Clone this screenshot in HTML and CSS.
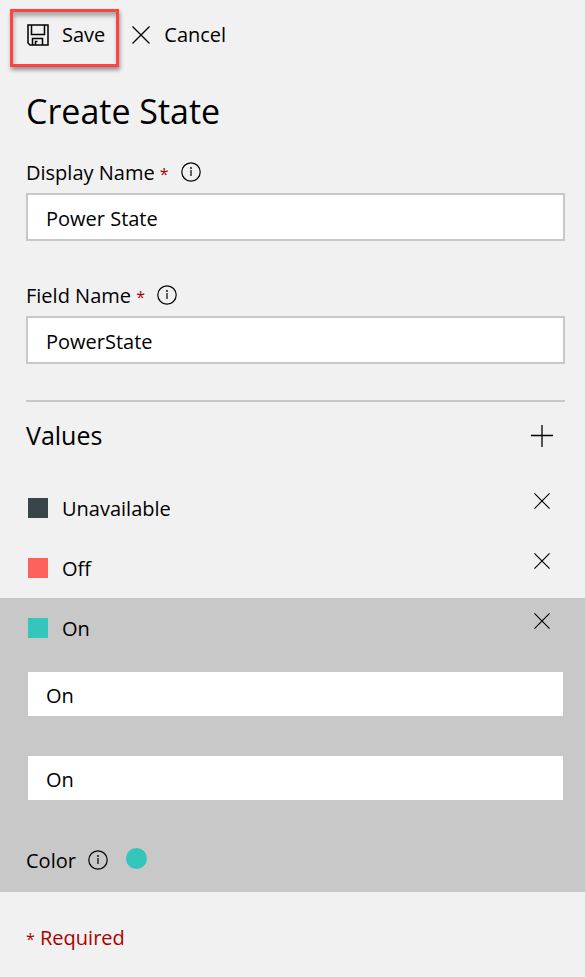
FILE: index.html
```html
<!DOCTYPE html>
<html lang="en">
<head>
<meta charset="utf-8">
<meta name="viewport" content="width=device-width, initial-scale=1">
<title>Create State</title>
<link rel="stylesheet" href="styles.css">
</head>
<body>
<svg class="sprite" aria-hidden="true">
  <symbol id="info" viewBox="0 0 20 20">
    <circle cx="10" cy="10" r="9.2" fill="none" stroke="currentColor" stroke-width="1.2"/>
    <path d="M10 8v6" fill="none" stroke="currentColor" stroke-width="1.2"/>
    <circle cx="10" cy="6" r=".9" fill="currentColor"/>
  </symbol>
  <symbol id="cross" viewBox="0 0 18 18">
    <path d="M.5.5l17 17M17.5.5l-17 17" fill="none" stroke="currentColor" stroke-width="1.3"/>
  </symbol>
</svg>
<form class="panel">
  <div class="toolbar">
    <button type="button" class="command highlighted">
      <svg class="icon-save" viewBox="0 0 22 22" aria-hidden="true">
        <path d="M1 1h20v20H3l-2-2zM4.500 1v9.500h13V1M5.500 21v-6.500h10V21M8.500 21v-3.500h2" fill="none" stroke="currentColor" stroke-width="1.5"/>
      </svg>
      <span>Save</span>
    </button>
    <button type="button" class="command">
      <svg class="icon-cancel" aria-hidden="true"><use href="#cross"/></svg>
      <span>Cancel</span>
    </button>
  </div>

  <h1>Create State</h1>

  <div class="field">
    <div class="label-row">
      <label for="display-name">Display Name <span class="mark">*</span></label>
      <svg class="icon-info" aria-hidden="true"><use href="#info"/></svg>
    </div>
    <input id="display-name" type="text" value="Power State" required>
  </div>
  <div class="field">
    <div class="label-row">
      <label for="field-name">Field Name <span class="mark">*</span></label>
      <svg class="icon-info" aria-hidden="true"><use href="#info"/></svg>
    </div>
    <input id="field-name" type="text" value="PowerState" required>
  </div>

  <div class="values-head">
    <h2>Values</h2>
    <button type="button" class="icon-button" aria-label="Add value">
      <svg class="icon-add" viewBox="0 0 22 22" aria-hidden="true"><path d="M11 0v22M0 10.500h22" fill="none" stroke="currentColor" stroke-width="1.300"/></svg>
    </button>
  </div>

  <ul class="values">
    <li class="value">
      <div class="value-row">
        <span class="swatch unavailable"></span><span class="value-name">Unavailable</span>
        <button type="button" class="icon-button remove" aria-label="Remove Unavailable"><svg class="icon-remove" aria-hidden="true"><use href="#cross"/></svg></button>
      </div>
    </li>
    <li class="value">
      <div class="value-row">
        <span class="swatch off"></span><span class="value-name">Off</span>
        <button type="button" class="icon-button remove" aria-label="Remove Off"><svg class="icon-remove" aria-hidden="true"><use href="#cross"/></svg></button>
      </div>
    </li>
    <li class="value selected">
      <div class="value-row">
        <span class="swatch on"></span><span class="value-name">On</span>
        <button type="button" class="icon-button remove" aria-label="Remove On"><svg class="icon-remove" aria-hidden="true"><use href="#cross"/></svg></button>
      </div>
      <div class="editor">
        <input type="text" value="On" aria-label="Value name">
        <input type="text" value="On" aria-label="Value label">
        <div class="color-row">
          <span class="color-label">Color</span>
          <svg class="icon-info" aria-hidden="true"><use href="#info"/></svg>
          <button type="button" class="color-dot on" aria-label="Choose color"></button>
        </div>
      </div>
    </li>
  </ul>

  <p class="required-note"><span class="mark">*</span> Required</p>
</form>
</body>
</html>
```
FILE: styles.css
```css
* {
  box-sizing: border-box;
}

body {
  margin: 0;
  background: #f1f1f1;
  color: #000;
  font: 20px/28px "Open Sans", "Noto Sans", sans-serif;
}

button {
  padding: 0;
  border: 0;
  background: none;
  color: inherit;
  font: inherit;
  cursor: pointer;
}

svg {
  display: block;
  flex: none;
}

.sprite {
  position: absolute;
  width: 0;
  height: 0;
}

.toolbar {
  display: flex;
  gap: 13px;
  padding: 9px 10px 0;
}

.command {
  display: flex;
  align-items: center;
  gap: 14px;
  height: 58px;
  padding-bottom: 6px;
}

.highlighted {
  gap: 13px;
  padding: 0 11px 6px 14px;
  border: 3px solid #ff4343;
  box-shadow: 1px 3px 4px rgba(0, 0, 0, .4), inset 1px 4px 4px rgba(0, 0, 0, .3);
}

.icon-save {
  width: 22px;
  height: 22px;
}

.icon-cancel {
  width: 18px;
  height: 18px;
}

.icon-info {
  width: 20px;
  height: 20px;
}

.icon-add {
  width: 22px;
  height: 22px;
}

.icon-remove {
  width: 16px;
  height: 16px;
}

h1 {
  margin: 20px 26px 24px;
  font-size: 34px;
  font-weight: 400;
  line-height: 48px;
}

.field {
  margin: 0 20px 41px 26px;
}

.label-row {
  display: flex;
  gap: 12px;
  height: 34px;
}

.label-row .icon-info {
  margin-top: 3px;
}

.mark,
.required-note {
  color: #a80000;
}

.mark {
  font-size: 16px;
}

input {
  display: block;
  width: 100%;
  height: 48px;
  padding: 2px 18px 0;
  border: 2px solid #c8c8c8;
  border-radius: 0;
  background: #fff;
  color: inherit;
  font: inherit;
}

.values-head {
  display: flex;
  align-items: center;
  justify-content: space-between;
  height: 78px;
  margin: -5px 20px 0 26px;
  padding: 0 12px 8px 0;
  border-top: 2px solid #c8c8c8;
}

h2 {
  margin: 0;
  padding-bottom: 2px;
  font-size: 25px;
  font-weight: 400;
  line-height: 34px;
}

.values {
  margin: 0;
  padding: 0;
  list-style: none;
}

.value {
  padding: 0 20px 0 28px;
}

.value-row {
  display: flex;
  align-items: center;
  gap: 14px;
  height: 60px;
}

.value-name {
  flex: 1;
  padding-top: 2px;
}

.remove {
  padding: 0 15px 14px 0;
}

.swatch {
  width: 20px;
  height: 20px;
}

.unavailable {
  background: #394649;
}

.off {
  background: #fd625e;
}

.on {
  background: #35c6bb;
}

.selected {
  padding-left: 26px;
  background: #c8c8c8;
}

.selected .value-row {
  padding-left: 2px;
}

.editor {
  display: grid;
  gap: 36px;
  padding: 12px 0 14px;
}

.color-row {
  display: flex;
  align-items: center;
  gap: 12px;
  height: 40px;
}

.color-label {
  padding-top: 6px;
}

.color-row .icon-info {
  margin-top: 3px;
}

.color-dot {
  width: 21px;
  height: 21px;
  margin-left: 6px;
  border-radius: 50%;
}

.required-note {
  margin: 32px 26px 24px;
}
```
